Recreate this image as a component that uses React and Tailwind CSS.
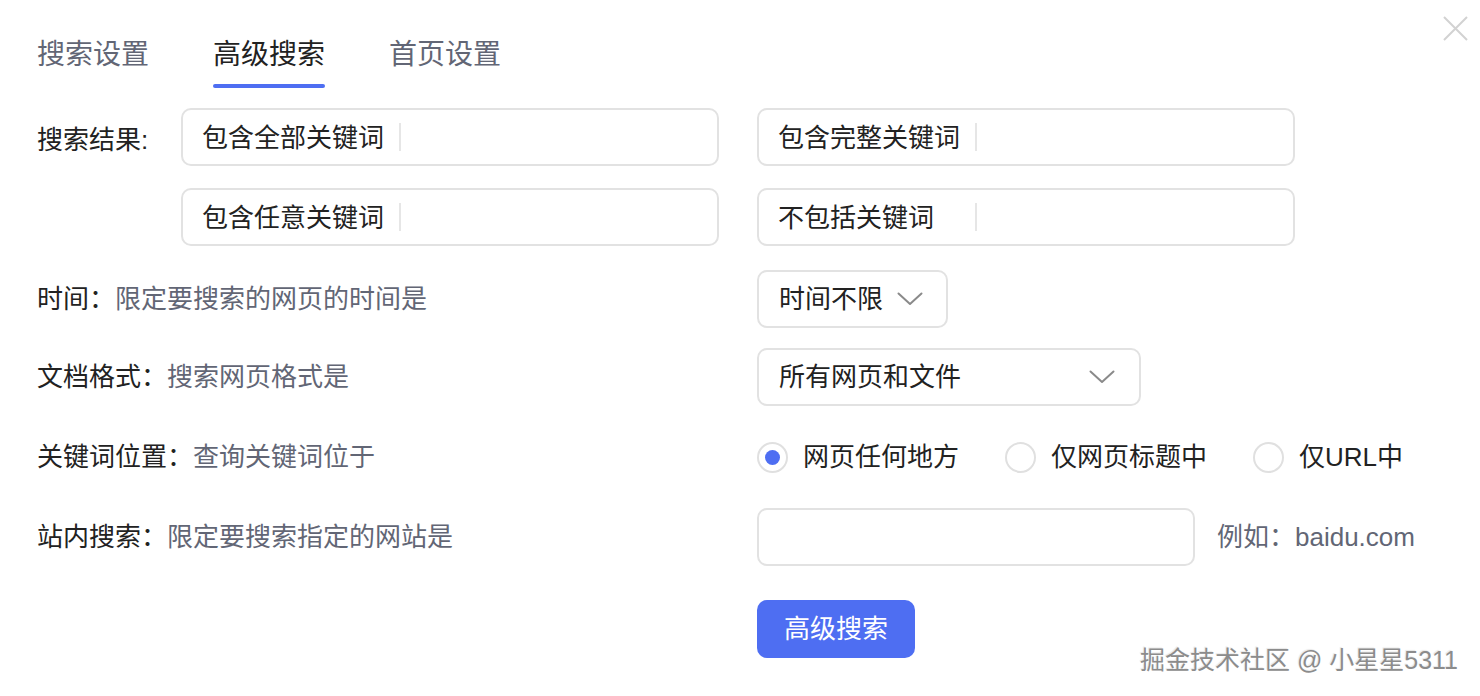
import { useState } from "react";

const FONT = "font-['Liberation_Sans','Noto_Sans_CJK_SC',sans-serif]";

const Chevron = () => (
  <svg width="26" height="14" viewBox="0 0 26 14" fill="none">
    <polyline points="1.5,1.5 13,12 24.5,1.5" stroke="#8a8a8a" strokeWidth="2" strokeLinecap="round" strokeLinejoin="round" />
  </svg>
);

const KeywordInput = ({ label }) => (
  <div className="flex items-center h-[58px] w-[538px] rounded-[10px] border-2 border-[#e2e2e2] bg-white pl-[19px]">
    <span className="w-[197px] shrink-0 pt-[3px] text-[26px] text-[#222]">{label}</span>
    <span className="h-[28px] w-[2px] bg-[#e6e6e6]" />
  </div>
);

const Radio = ({ checked, label, onClick }) => (
  <button type="button" onClick={onClick} className="flex items-center gap-[15px]">
    <span className="flex h-[31px] w-[31px] items-center justify-center rounded-full border-2 border-[#e0e0e0]">
      {checked && <span className="h-[15px] w-[15px] rounded-full bg-[#4e6ef2]" />}
    </span>
    <span className="text-[26px] text-[#222]">{label}</span>
  </button>
);

const Row = ({ title, desc, className, children }) => (
  <div className={"flex items-center h-[58px] " + className}>
    <div className="w-[720px] shrink-0 text-[26px]">
      <span className="text-[#222]">{title}：</span>
      <span className="text-[#626675]">{desc}</span>
    </div>
    {children}
  </div>
);

export default function App() {
  const [tab, setTab] = useState(1);
  const [pos, setPos] = useState(0);
  const tabs = ["搜索设置", "高级搜索", "首页设置"];

  return (
    <div className={"relative h-[696px] w-[1480px] overflow-hidden bg-white pl-[37px] " + FONT}>
      {/* close */}
      <button type="button" className="absolute right-[11px] top-[15px]">
        <svg width="27" height="27" viewBox="0 0 27 27">
          <path d="M2 2 L25 25 M25 2 L2 25" stroke="#d2d2d2" strokeWidth="2" />
        </svg>
      </button>

      {/* tabs */}
      <div className="flex gap-[64px] pt-[35px]">
        {tabs.map((t, i) => (
          <button key={t} type="button" onClick={() => setTab(i)} className="flex flex-col items-center">
            <span className={"text-[28px] leading-[40px] " + (tab === i ? "text-[#222]" : "text-[#626675]")}>{t}</span>
            <span className={"mt-[9px] h-[4px] w-full rounded-full " + (tab === i ? "bg-[#4e6ef2]" : "bg-transparent")} />
          </button>
        ))}
      </div>

      {/* 搜索结果 */}
      <div className="mt-[20px] flex">
        <div className="w-[144px] shrink-0 pt-[13px] text-[26px] text-[#222]">搜索结果:</div>
        <div className="grid grid-cols-[538px_538px] gap-x-[38px] gap-y-[22px]">
          <KeywordInput label="包含全部关键词" />
          <KeywordInput label="包含完整关键词" />
          <KeywordInput label="包含任意关键词" />
          <KeywordInput label="不包括关键词" />
        </div>
      </div>

      <Row title="时间" desc="限定要搜索的网页的时间是" className="mt-[24px]">
        <div className="flex h-[58px] items-center gap-[14px] rounded-[10px] border-2 border-[#e2e2e2] pl-[20px] pr-[23px]">
          <span className="text-[26px] text-[#222]">时间不限</span>
          <Chevron />
        </div>
      </Row>

      <Row title="文档格式" desc="搜索网页格式是" className="mt-[20px]">
        <div className="flex h-[58px] w-[384px] items-center justify-between rounded-[10px] border-2 border-[#e2e2e2] pl-[20px] pr-[24px]">
          <span className="text-[26px] text-[#222]">所有网页和文件</span>
          <Chevron />
        </div>
      </Row>

      <Row title="关键词位置" desc="查询关键词位于" className="mt-[22px]">
        <div className="flex items-center gap-[46px]">
          <Radio label="网页任何地方" checked={pos === 0} onClick={() => setPos(0)} />
          <Radio label="仅网页标题中" checked={pos === 1} onClick={() => setPos(1)} />
          <Radio label="仅URL中" checked={pos === 2} onClick={() => setPos(2)} />
        </div>
      </Row>

      <Row title="站内搜索" desc="限定要搜索指定的网站是" className="mt-[22px]">
        <div className="h-[58px] w-[438px] rounded-[10px] border-2 border-[#e2e2e2]" />
        <span className="ml-[22px] text-[26px] text-[#626675]">例如：baidu.com</span>
      </Row>

      <div className="mt-[34px] pl-[720px]">
        <button type="button" className="h-[58px] w-[158px] rounded-[10px] bg-[#4e6ef2] text-[26px] text-white">
          高级搜索
        </button>
      </div>

      {/* watermark */}
      <div className="absolute bottom-[17px] right-[22px] text-[25px] text-[#8c8c8c] [text-shadow:1px_1px_1px_#fff,-1px_-1px_1px_#e8e8e8]">
        掘金技术社区 @ 小星星5311
      </div>
    </div>
  );
}
